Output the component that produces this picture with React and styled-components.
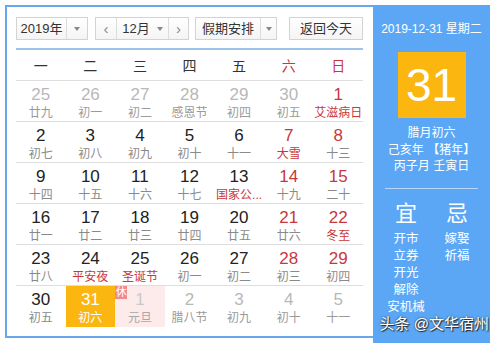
import React from 'react'
import styled, { createGlobalStyle } from 'styled-components'

const GlobalStyle = createGlobalStyle`
  * { box-sizing: border-box; }
  body {
    margin: 0;
    background: #fff;
    font-family: "Liberation Sans", "Noto Sans CJK SC", sans-serif;
  }
`

const Page = styled.div`
  position: relative;
  width: 499px;
  height: 346px;
  padding: 5px 0 0 5px;
`

const Frame = styled.div`
  display: flex;
  align-items: flex-start;
  width: 485px;
`

const Main = styled.div`
  width: 368px;
  height: 333px;
  border: 2px solid #68a8ea;
  border-right: none;
  padding: 10px 10px 0 9px;
`

const Toolbar = styled.div`
  display: flex;
  height: 23px;
  padding-bottom: 8px;
  border-bottom: 2px solid #9cc3e9;
  box-sizing: content-box;
`

const Box = styled.div`
  display: flex;
  height: 23px;
  width: ${({ w }) => w}px;
  margin-right: ${({ gap }) => gap || 0}px;
  border: 1px solid #d3d3d3;
  background: linear-gradient(#fff, #f4f4f4);
  color: #333;
  font-size: 13px;
`

const Part = styled.div`
  display: flex;
  align-items: center;
  justify-content: center;
  flex: ${({ w }) => (w ? `0 0 ${w}px` : '1')};
  border-left: ${({ sep }) => (sep ? '1px solid #dcdcdc' : 'none')};
  color: ${({ muted }) => (muted ? '#888' : '#333')};
  font-size: ${({ fs }) => fs || 13}px;
  line-height: 1;
`

const Caret = styled.span`
  display: inline-block;
  width: 0;
  height: 0;
  margin-left: ${({ ml }) => ml || 0}px;
  border-left: 3px solid transparent;
  border-right: 3px solid transparent;
  border-top: 4px solid #888;
`

const Grid = styled.div`
  display: grid;
  grid-template-columns: repeat(7, 1fr);
`

const WeekHead = styled.div`
  height: 31px;
  display: flex;
  align-items: center;
  justify-content: center;
  font-size: 14px;
  color: ${({ red }) => (red ? '#c8373c' : '#333')};
  border-bottom: 1px solid #dedede;
`

const Cell = styled.div`
  position: relative;
  height: 41px;
  padding-top: 4px;
  text-align: center;
  border-bottom: ${({ last }) => (last ? 'none' : '1px solid #dedede')};
  background: ${({ bg }) => bg || 'transparent'};
  white-space: nowrap;
`

const Num = styled.div`
  font-size: 17px;
  line-height: 20px;
  color: ${({ c }) => c};
`

const Lunar = styled.div`
  font-size: 12px;
  line-height: 16px;
  color: ${({ c }) => c};
`

const Rest = styled.span`
  position: absolute;
  left: 0;
  top: 0;
  width: 12px;
  height: 13px;
  background: #ef8a8f;
  color: #fff;
  font-size: 11px;
  line-height: 13px;
  text-align: center;
`

const Side = styled.div`
  width: 117px;
  height: 338px;
  background: #5ba7f5;
  color: #fff;
  display: flex;
  flex-direction: column;
  align-items: center;
  padding-top: 16px;
`

const DateLine = styled.div`
  font-size: 12px;
  line-height: 16px;
`

const DayBox = styled.div`
  width: 68px;
  height: 66px;
  margin-top: 15px;
  background: #fbb60f;
  display: flex;
  align-items: center;
  justify-content: center;
  font-size: 46px;
  line-height: 1;
`

const Info = styled.div`
  margin-top: 7px;
  font-size: 12px;
  line-height: 16.5px;
  text-align: center;
`

const Divider = styled.div`
  width: 93px;
  height: 1px;
  margin-top: 13px;
  background: rgba(255, 255, 255, 0.55);
`

const Advice = styled.div`
  display: flex;
  gap: 1px;
  margin-top: 12px;
`

const AdviceCol = styled.div`
  width: 50px;
  display: flex;
  flex-direction: column;
  align-items: center;
`

const AdviceHead = styled.div`
  font-size: 22px;
  line-height: 26px;
  margin-bottom: 4px;
`

const AdviceItem = styled.div`
  font-size: 12.5px;
  line-height: 17px;
`

const Mark = styled.div`
  position: absolute;
  right: 10px;
  bottom: 13px;
  color: #fff;
  font-size: 15px;
  line-height: 18px;
  text-shadow: 0 0 2px #333, 1px 1px 1px #222;
`

const RED = '#c8373c'
const GREY_N = '#b8b8b8'
const GREY_L = '#9a9a9a'

const rows = [
  [['25', '廿九', 'o'], ['26', '初一', 'o'], ['27', '初二', 'o'], ['28', '感恩节', 'o'], ['29', '初四', 'o'], ['30', '初五', 'o'], ['1', '艾滋病日', 'rh']],
  [['2', '初七'], ['3', '初八'], ['4', '初九'], ['5', '初十'], ['6', '十一'], ['7', '大雪', 'rh'], ['8', '十三', 'r']],
  [['9', '十四'], ['10', '十五'], ['11', '十六'], ['12', '十七'], ['13', '国家公...', 'h'], ['14', '十九', 'r'], ['15', '二十', 'r']],
  [['16', '廿一'], ['17', '廿二'], ['18', '廿三'], ['19', '廿四'], ['20', '廿五'], ['21', '廿六', 'r'], ['22', '冬至', 'rh']],
  [['23', '廿八'], ['24', '平安夜', 'h'], ['25', '圣诞节', 'h'], ['26', '初一'], ['27', '初二'], ['28', '初三', 'r'], ['29', '初四', 'r']],
  [['30', '初五'], ['31', '初六', 't'], ['1', '元旦', 'rest'], ['2', '腊八节', 'o'], ['3', '初九', 'o'], ['4', '初十', 'o'], ['5', '十一', 'o']],
]

const week = ['一', '二', '三', '四', '五', '六', '日']

function colors(kind = '') {
  if (kind === 't') return { n: '#fff', l: '#fff', bg: '#fbb60f' }
  if (kind === 'rest') return { n: '#c9c9c9', l: '#a8a8a8', bg: '#fdeaea' }
  if (kind === 'o') return { n: GREY_N, l: GREY_L }
  const n = kind.includes('r') ? RED : '#222'
  const l = kind.includes('h') ? RED : '#8a8a8a'
  return { n, l }
}

export default function App() {
  return (
    <Page>
      <GlobalStyle />
      <Frame>
        <Main>
          <Toolbar>
            <Box w={72} gap={7}>
              <Part>2019年</Part>
              <Part w={21} sep><Caret /></Part>
            </Box>
            <Box w={94} gap={6}>
              <Part w={20} muted fs={15}>‹</Part>
              <Part sep>12月<Caret ml={7} /></Part>
              <Part w={20} sep muted fs={15}>›</Part>
            </Box>
            <Box w={82} gap={12}>
              <Part>假期安排</Part>
              <Part w={16} sep><Caret /></Part>
            </Box>
            <Box w={74}>
              <Part>返回今天</Part>
            </Box>
          </Toolbar>
          <Grid>
            {week.map((d, i) => (
              <WeekHead key={d} red={i > 4}>{d}</WeekHead>
            ))}
            {rows.map((row, ri) =>
              row.map(([n, l, kind], ci) => {
                const c = colors(kind)
                return (
                  <Cell key={`${ri}-${ci}`} bg={c.bg} last={ri === rows.length - 1}>
                    {kind === 'rest' && <Rest>休</Rest>}
                    <Num c={c.n}>{n}</Num>
                    <Lunar c={c.l}>{l}</Lunar>
                  </Cell>
                )
              })
            )}
          </Grid>
        </Main>
        <Side>
          <DateLine>2019-12-31 星期二</DateLine>
          <DayBox>31</DayBox>
          <Info>
            <div>腊月初六</div>
            <div>己亥年 【猪年】</div>
            <div>丙子月 壬寅日</div>
          </Info>
          <Divider />
          <Advice>
            <AdviceCol>
              <AdviceHead>宜</AdviceHead>
              {['开市', '立券', '开光', '解除', '安机械'].map(t => (
                <AdviceItem key={t}>{t}</AdviceItem>
              ))}
            </AdviceCol>
            <AdviceCol>
              <AdviceHead>忌</AdviceHead>
              {['嫁娶', '祈福'].map(t => (
                <AdviceItem key={t}>{t}</AdviceItem>
              ))}
            </AdviceCol>
          </Advice>
        </Side>
      </Frame>
      <Mark>头条 @文华宿州</Mark>
    </Page>
  )
}
